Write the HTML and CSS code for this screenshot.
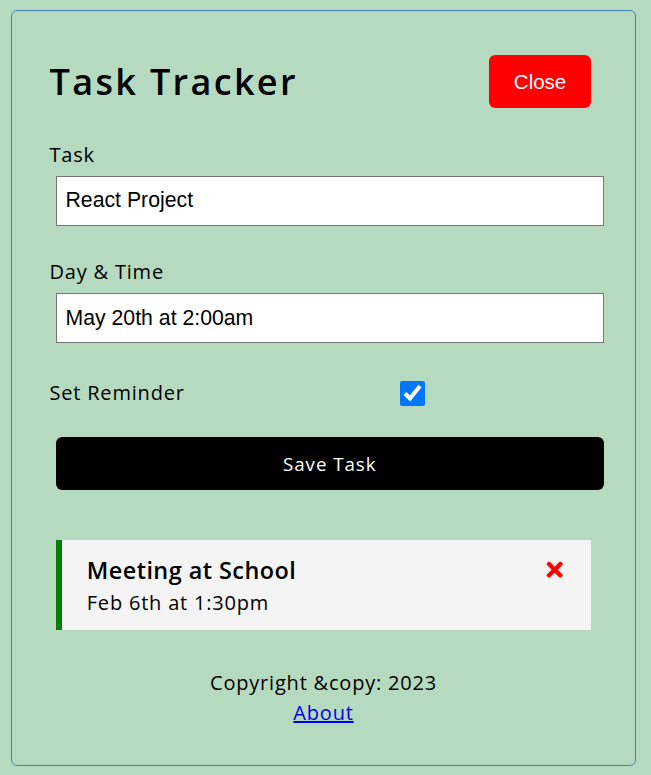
FILE: index.html
```html
<!DOCTYPE html>
<html>
<head>
<meta charset="utf-8">
<title>Task Tracker</title>
<link rel="stylesheet" href="styles.css">
</head>
<body>
<div class="container">
  <header class="header">
    <h1>Task Tracker</h1>
    <button class="btn btn-close" type="button">Close</button>
  </header>
  <form class="add-form">
    <div class="form-control">
      <label>Task</label>
      <input type="text" value="React Project">
    </div>
    <div class="form-control">
      <label>Day &amp; Time</label>
      <input type="text" value="May 20th at 2:00am">
    </div>
    <div class="form-control form-control-check">
      <label>Set Reminder</label>
      <input type="checkbox" checked>
    </div>
    <input type="submit" value="Save Task" class="btn btn-block">
  </form>
  <div class="task reminder">
    <h3>Meeting at School <svg class="del" viewBox="0 0 352 512" aria-hidden="true"><path d="M242.72 256l100.07-100.07c12.28-12.28 12.28-32.19 0-44.48l-22.24-22.24c-12.28-12.280-32.19-12.28-44.48 0L176 189.28 75.930 89.21c-12.28-12.28-32.19-12.28-44.48 0L9.21 111.450c-12.28 12.28-12.28 32.19 0 44.48L109.28 256 9.21 356.07c-12.28 12.28-12.28 32.19 0 44.48l22.24 22.24c12.28 12.28 32.2 12.28 44.48 0L176 322.72l100.07 100.07c12.28 12.28 32.2 12.28 44.48 0l22.24-22.24c12.28-12.28 12.28-32.19 0-44.48L242.720 256z"/></svg></h3>
    <p>Feb 6th at 1:30pm</p>
  </div>
  <footer class="footer">
    <p>Copyright &amp;copy: 2023</p>
    <a href="#">About</a>
  </footer>
</div>
</body>
</html>
```

FILE: styles.css
```css
* {
  box-sizing: border-box;
  margin: 0;
  padding: 0;
}

body {
  font-family: "Open Sans", "DejaVu Sans", sans-serif;
  background: #b5dac0;
  font-size: 20px;
  line-height: 1.5;
  letter-spacing: 0.04em;
  color: #000;
}

.container {
  width: 625px;
  margin: 10px 0 0 11px;
  min-height: 375px;
  border: 1px solid #4682b4;
  border-radius: 6px;
  padding: 37.5px;
}

.header {
  display: flex;
  justify-content: space-between;
  align-items: center;
  margin-bottom: 25px;
}

.header h1 {
  font-size: 36px;
  font-weight: 600;
  line-height: 60px;
  letter-spacing: 0.065em;
}

.btn {
  display: inline-block;
  background: #000;
  color: #fff;
  border: none;
  padding: 12.5px 25px;
  margin: 6.25px;
  border-radius: 6.25px;
  cursor: pointer;
  font-size: 18.75px;
  font-family: inherit;
  line-height: 1.5;
  letter-spacing: 0.05em;
}

.btn-close {
  background: #ff0000;
  font-family: "Liberation Sans", Arial, sans-serif;
  font-size: 20.5px;
  line-height: 28px;
  letter-spacing: 0;
  padding: 12.75px 25px;
}

.btn-block {
  display: block;
  width: 100%;
}

.form-control {
  margin: 25px 0;
}

.form-control label {
  display: block;
}

.form-control input {
  width: 100%;
  height: 50px;
  margin: 6.25px;
  padding: 3.75px 8.75px;
  font-size: 21.25px;
  font-family: "Liberation Sans", Arial, sans-serif;
  letter-spacing: 0;
  border: 1px solid #767676;
  background: #fff;
  color: #000;
}

.form-control-check {
  display: flex;
  align-items: center;
  justify-content: space-between;
}

.form-control-check label {
  flex: 1;
}

.form-control-check input {
  flex: 2;
  height: 25px;
  accent-color: #0075ff;
}

.add-form {
  margin-bottom: 50px;
}

.task {
  background: #f4f4f4;
  margin: 6.25px;
  padding: 12.5px 25px;
}

.task.reminder {
  border-left: 6.25px solid #008000;
}

.task h3 {
  display: flex;
  align-items: center;
  justify-content: space-between;
  font-size: 23.4px;
  font-weight: 600;
  line-height: 1.5;
  letter-spacing: 0.02em;
}

.task p {
  line-height: 1.5;
}

.del {
  width: 23.4px;
  height: 23.4px;
  fill: #ff0000;
}

.footer {
  margin-top: 37.5px;
  text-align: center;
}

.footer a {
  color: #0000ee;
}
```
